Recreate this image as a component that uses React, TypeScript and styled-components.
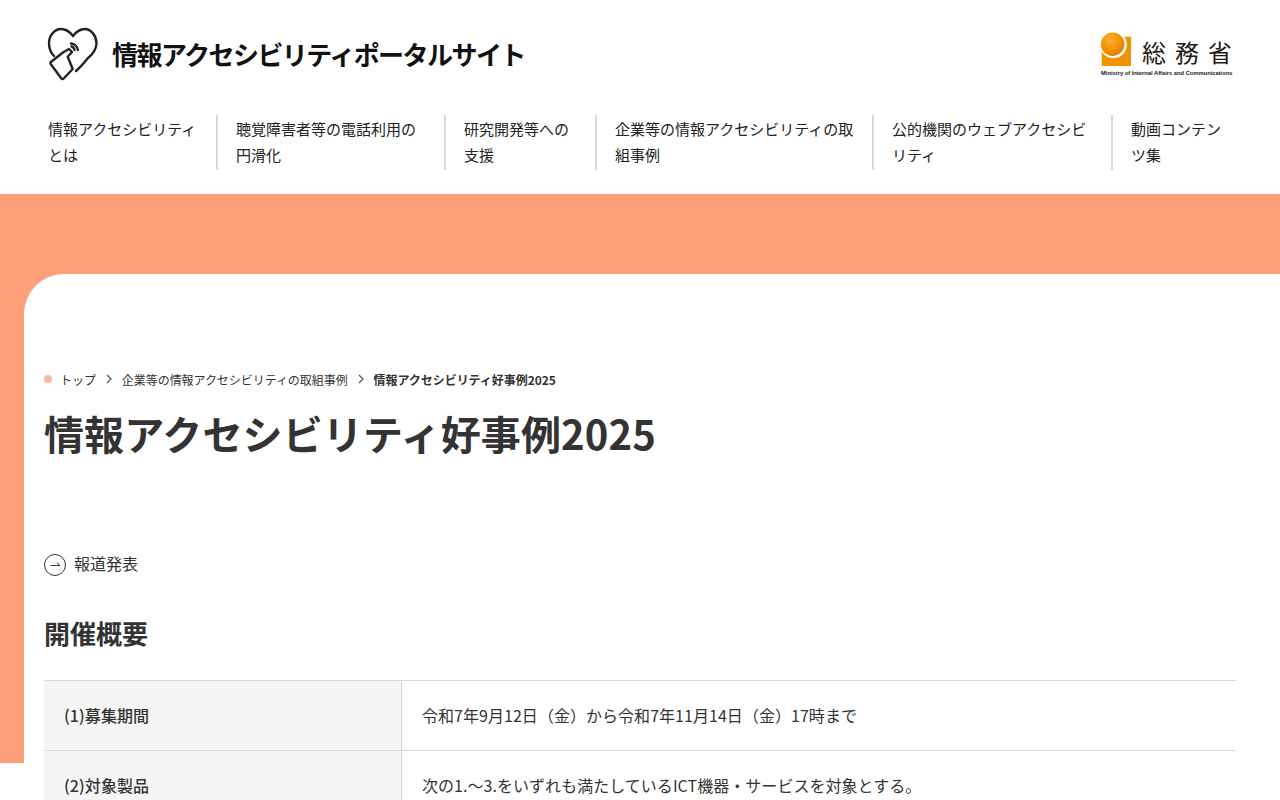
import styled, { createGlobalStyle } from "styled-components";

const GlobalStyle = createGlobalStyle`
  html, body {
    margin: 0;
    padding: 0;
    background: #fff;
    overflow: hidden;
    height: 800px;
    font-family: "Noto Sans CJK JP", "Noto Sans", sans-serif;
    color: #333;
  }
  * { box-sizing: border-box; }
`;

const Header = styled.header`
  height: 194px;
  padding: 0 48px;
  background: #fff;
`;

const TopRow = styled.div`
  display: flex;
  justify-content: space-between;
  align-items: flex-start;
  height: 115px;
`;

const Brand = styled.a`
  display: flex;
  align-items: center;
  gap: 14px;
  padding-top: 26px;
  margin-left: -2px;
  color: #111;
`;

const SiteTitle = styled.span`
  font-size: 26px;
  font-weight: 700;
  letter-spacing: -1.55px;
  line-height: 54px;
`;

const Soumu = styled.div`
  display: grid;
  grid-template-columns: 31px 1fr;
  width: 131px;
  margin-top: 32px;
  color: #231815;
`;

const SoumuName = styled.span`
  font-size: 24px;
  font-weight: 400;
  line-height: 34px;
  letter-spacing: 8.9px;
  padding: 3px 0 0 10px;
  white-space: nowrap;
`;

const SoumuEnglish = styled.span`
  grid-column: 1 / 3;
  font-family: "Liberation Sans", sans-serif;
  font-size: 5.78px;
  font-weight: 700;
  line-height: 8px;
  white-space: nowrap;
`;

const Nav = styled.nav`
  display: flex;
`;

const NavItem = styled.a<{ $w: number; $first?: boolean }>`
  width: ${(p) => p.$w}px;
  height: 55px;
  padding: 0.7px 18px 0 ${(p) => (p.$first ? 0 : 18)}px;
  border-left: ${(p) => (p.$first ? "none" : "2px solid #d9d9d9")};
  font-size: 15px;
  line-height: 26.6px;
  color: #222;

  &:last-child {
    padding-right: 0;
  }
`;

const Stage = styled.div`
  background: linear-gradient(#ff9e7b, #ff9e7b) no-repeat 0 0 / 100% 569px;
  padding: 80px 0 0 24px;
`;

const Main = styled.main`
  background: #fff;
  border-top-left-radius: 40px;
  padding: 95px 44px 0 20px;
`;

const Crumbs = styled.ol`
  display: flex;
  align-items: center;
  list-style: none;
  margin: 0;
  padding: 0;
  height: 20px;
  font-size: 12px;
  letter-spacing: -0.05px;
  color: #333;
`;

const Dot = styled.span`
  width: 8px;
  height: 8px;
  border-radius: 50%;
  background: #ffb9a3;
  margin-right: 8px;
`;

const Crumb = styled.li<{ $current?: boolean }>`
  font-weight: ${(p) => (p.$current ? 700 : 400)};
`;

const Chevron = styled.svg`
  width: 8px;
  height: 10px;
  margin: 0 9px;
`;

const PageTitle = styled.h1`
  margin: 18px 0 0;
  font-size: 40px;
  font-weight: 700;
  line-height: 52px;
  letter-spacing: 0.11px;
  color: #333;
`;

const ReleaseLink = styled.a`
  display: flex;
  align-items: center;
  gap: 8px;
  margin-top: 93px;
  height: 24px;
  font-size: 16px;
  color: #333;
`;

const ArrowCircle = styled.svg`
  width: 22px;
  height: 22px;
  margin-top: 2px;
`;

const ReleaseLabel = styled.span`
  padding-bottom: 2px;
`;

const SectionTitle = styled.h2`
  margin: 38px 0 0;
  font-size: 26px;
  font-weight: 700;
  line-height: 38px;
  color: #333;
`;

const Table = styled.dl`
  margin: 28px 0 0;
  border-top: 1px solid #d9d9d9;
`;

const Row = styled.div`
  display: grid;
  grid-template-columns: 358px 1fr;
  height: 70px;
  border-bottom: 1px solid #d9d9d9;
`;

const Term = styled.dt`
  display: flex;
  align-items: center;
  padding: 0 0 1px 20px;
  background: #f5f5f5;
  border-right: 1px solid #d9d9d9;
  font-size: 16px;
  font-weight: 500;
  letter-spacing: 0.1px;
`;

const Desc = styled.dd`
  display: flex;
  align-items: center;
  margin: 0;
  padding: 0 0 1px 20px;
  font-size: 16px;
  letter-spacing: 0.04px;
`;

const HeartLogo = () => (
  <svg width="52" height="56" viewBox="0 0 52 56" fill="none" stroke="#222" strokeWidth="2.4" strokeLinecap="round" strokeLinejoin="round">
    <path d="M8 30C4 26 3 21 3 17C3 9 9 3 15 3C20 3 24 6 27 10C30 6 34 3 39 3C45 3 50.5 10 50.5 17C50.5 24 47 28 42 32C38 37 35 41 30 45" />
    <path d="M5.5 35.5L17.3 26.3L23 23L26 26L21.7 30.7L26.7 43L17.7 52.5C17 53.2 16 53.2 15.4 52.5L4.7 38C4 37 4.6 36.2 5.5 35.5Z" />
    <path d="M25.5 20.5C27 20.8 28.2 22 28.4 24" />
    <path d="M25 17.5C28.5 17.8 31.5 20.5 31.8 24" />
  </svg>
);

const SoumuMark = () => (
  <svg width="31" height="34" viewBox="0 0 31 34">
    <defs>
      <radialGradient id="ball" cx="0.4" cy="0.3" r="0.8">
        <stop offset="0" stopColor="#ffb030" />
        <stop offset="0.6" stopColor="#f18d00" />
        <stop offset="1" stopColor="#e37b00" />
      </radialGradient>
    </defs>
    <rect x="0.7" y="4.7" width="29.3" height="29.3" fill="#f39200" />
    <circle cx="12.4" cy="12.8" r="13.4" fill="#fff" />
    <circle cx="11.7" cy="12.3" r="11.7" fill="url(#ball)" />
  </svg>
);

const navItems = [
  { w: 168, label: "情報アクセシビリティとは" },
  { w: 228, label: "聴覚障害者等の電話利用の円滑化" },
  { w: 151, label: "研究開発等への支援" },
  { w: 277, label: "企業等の情報アクセシビリティの取組事例" },
  { w: 239, label: "公的機関のウェブアクセシビリティ" },
  { w: 120, label: "動画コンテンツ集" },
];

export default function App() {
  return (
    <>
      <GlobalStyle />
      <Header>
        <TopRow>
          <Brand>
            <HeartLogo />
            <SiteTitle>情報アクセシビリティポータルサイト</SiteTitle>
          </Brand>
          <Soumu>
            <SoumuMark />
            <SoumuName>総務省</SoumuName>
            <SoumuEnglish>Ministry of Internal Affairs and Communications</SoumuEnglish>
          </Soumu>
        </TopRow>
        <Nav>
          {navItems.map((item, i) => (
            <NavItem key={item.label} $w={item.w} $first={i === 0}>
              {item.label}
            </NavItem>
          ))}
        </Nav>
      </Header>
      <Stage>
        <Main>
          <Crumbs>
            <Dot />
            <Crumb>トップ</Crumb>
            <Chevron viewBox="0 0 8 10" fill="none" stroke="#555" strokeWidth="1.2">
              <path d="M2 1L6 5L2 9" />
            </Chevron>
            <Crumb>企業等の情報アクセシビリティの取組事例</Crumb>
            <Chevron viewBox="0 0 8 10" fill="none" stroke="#555" strokeWidth="1.2">
              <path d="M2 1L6 5L2 9" />
            </Chevron>
            <Crumb $current>情報アクセシビリティ好事例2025</Crumb>
          </Crumbs>
          <PageTitle>情報アクセシビリティ好事例2025</PageTitle>
          <ReleaseLink>
            <ArrowCircle viewBox="0 0 22 22" fill="none" stroke="#333" strokeWidth="1">
              <circle cx="11" cy="11" r="10.5" />
              <path d="M6.5 11.5H16L13 8.8" />
            </ArrowCircle>
            <ReleaseLabel>報道発表</ReleaseLabel>
          </ReleaseLink>
          <SectionTitle>開催概要</SectionTitle>
          <Table>
            <Row>
              <Term>(1)募集期間</Term>
              <Desc>令和7年9月12日（金）から令和7年11月14日（金）17時まで</Desc>
            </Row>
            <Row>
              <Term>(2)対象製品</Term>
              <Desc>次の1.～3.をいずれも満たしているICT機器・サービスを対象とする。</Desc>
            </Row>
          </Table>
        </Main>
      </Stage>
    </>
  );
}
